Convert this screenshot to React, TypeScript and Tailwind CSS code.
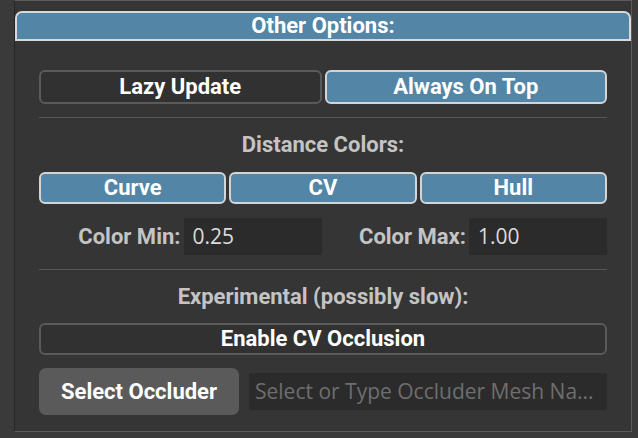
import type { ReactNode } from 'react';

const Toggle = ({ on, children }: { on?: boolean; children: ReactNode }) => (
  <button
    className={
      on
        ? 'flex-1 h-full rounded-[6px] border-2 border-[#d4d4d4] bg-[#5285a6] text-white font-bold text-[22px] leading-none'
        : 'flex-1 h-full rounded-[6px] border-2 border-[#5a5a5a] bg-[#313131] text-white font-bold text-[22px] leading-none'
    }
  >
    {children}
  </button>
);

const Field = ({ label, value }: { label: string; value: string }) => (
  <div className="flex-1 flex items-center h-full">
    <span className="flex-1 text-right pr-[3px] text-[#c4c4c4] font-bold text-[22px] leading-none">{label}</span>
    <div className="w-[138px] h-full bg-[#2b2b2b] flex items-center pl-[9px] text-[#dcdcdc] text-[21px] font-['Open_Sans',sans-serif]">
      {value}
    </div>
  </div>
);

const App = () => {
  return (
    <div className="w-[638px] h-[438px] bg-[#3a3a3a] font-['Roboto',sans-serif] overflow-hidden">
      <div className="ml-[14px] w-[618px] h-[432px] bg-[#353535] border-l border-[#262626] border-t border-t-[#5c5c5c] border-r border-r-[#5c5c5c] border-b border-b-[#5c5c5c] flex flex-col">
        <div className="mt-[10px] h-[30px] rounded-t-[7px] border-x-2 border-t-2 border-b-2 border-[#d8d8d8] bg-[#5285a6] flex items-end justify-center">
          <span className="text-white font-bold text-[22px] leading-none mb-[2px]">Other Options:</span>
        </div>

        <div className="px-[24px] flex flex-col">
          <div className="mt-[29px] h-[34px] flex gap-[3px]">
            <Toggle>Lazy Update</Toggle>
            <Toggle on>Always On Top</Toggle>
          </div>

          <div className="mt-[13px] h-px bg-[#565656]" />

          <div className="mt-[16px] h-[22px] flex items-center justify-center text-[#c4c4c4] font-bold text-[22px] leading-none">
            Distance Colors:
          </div>

          <div className="mt-[16px] h-[32px] flex gap-[3px]">
            <Toggle on>Curve</Toggle>
            <Toggle on>CV</Toggle>
            <Toggle on>Hull</Toggle>
          </div>

          <div className="mt-[14px] h-[37px] flex gap-[3px]">
            <Field label="Color Min:" value="0.25" />
            <Field label="Color Max:" value="1.00" />
          </div>

          <div className="mt-[14px] h-px bg-[#565656]" />

          <div className="mt-[16px] h-[22px] flex items-center justify-center text-[#c4c4c4] font-bold text-[22px] leading-none">
            Experimental (possibly slow):
          </div>

          <div className="mt-[15px] h-[32px] flex">
            <Toggle>Enable CV Occlusion</Toggle>
          </div>

          <div className="mt-[13px] h-[47px] flex items-center gap-[10px]">
            <button className="w-[200px] h-full rounded-[7px] bg-[#5a5a5a] text-white font-bold text-[22px] leading-none">
              Select Occluder
            </button>
            <div className="flex-1 h-[37px] bg-[#2b2b2b] rounded-[2px] flex items-center pl-[6px] text-[#6e6e6e] text-[21px] font-['Open_Sans',sans-serif] whitespace-nowrap overflow-hidden">
              Select or Type Occluder Mesh Na...
            </div>
          </div>
        </div>
      </div>
    </div>
  );
};

export default App;
